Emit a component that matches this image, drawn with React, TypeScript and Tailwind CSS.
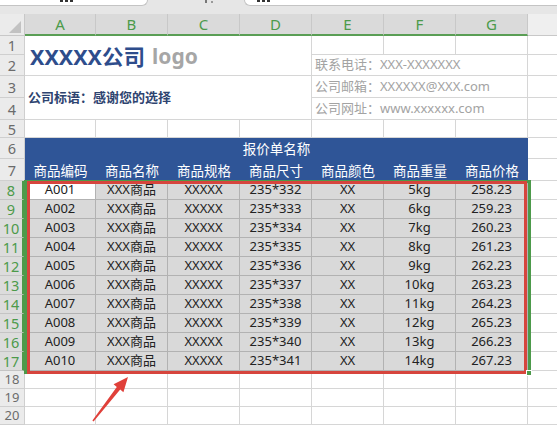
import * as React from "react"

const COLS = ["A", "B", "C", "D", "E", "F", "G"]
const HEADS = ["商品编码", "商品名称", "商品规格", "商品尺寸", "商品颜色", "商品重量", "商品价格"]

const rows = Array.from({ length: 10 }, (_, i) => [
  `A${String(i + 1).padStart(3, "0")}`,
  "XXX商品",
  "XXXXX",
  `235*${332 + i}`,
  "XX",
  `${5 + i}kg`,
  `${258 + i}.23`,
])

function RowHead({ n, sel }: { n: number; sel?: boolean }) {
  return (
    <div
      className={
        sel
          ? "flex items-center justify-center border-b border-b-[#c4c4c4] border-r-[3px] border-r-[#4c9a4a] bg-[#dcdcdc] text-[14.5px] leading-[14px] text-[#4c9a4a]"
          : n > 17
            ? "flex items-center justify-center border-b border-r border-[#cfcfcf] bg-[#ebebeb] text-[13px] leading-[13px] text-[#6b6b6b]"
            : "flex items-center justify-center border-b border-r border-[#cfcfcf] bg-[#ebebeb] text-[14.5px] leading-[14px] text-[#6b6b6b]"
      }
    >
      {n}
    </div>
  )
}

const white = "border-r border-b border-[#d6d6d6] bg-white"
const whiteH = "border-b border-[#d6d6d6] bg-white"
const navy = "flex items-center justify-center bg-[#2f5597] text-[13.5px] text-white"

export default function App() {
  return (
    <div className="relative h-[426px] w-[557px] overflow-hidden bg-white font-['Noto_Sans','Noto_Sans_CJK_SC',sans-serif]">
      {/* formula bar remains */}
      <div className="flex h-[14px] items-start bg-[#e6e6e6]">
        <div className="flex h-[6px] w-[148px] gap-[2px] rounded-br-md border-b border-r border-[#c4c4c4] bg-white pl-[60px]">
          <span className="h-[2px] w-[3px] bg-[#333]" />
          <span className="h-[2px] w-[3px] bg-[#333]" />
          <span className="h-[2px] w-[3px] bg-[#333]" />
        </div>
        <div className="flex w-[96px] gap-[4px] pl-[57px]">
          <span className="h-[3px] w-[2px] bg-[#777]" />
          <span className="mt-[1px] h-[2px] w-[2px] bg-[#999]" />
        </div>
        <div className="flex h-[6px] flex-1 gap-[2px] rounded-bl-md border-b border-l border-[#c4c4c4] bg-white pl-[12px]">
          <span className="h-[2px] w-[3px] bg-[#333]" />
          <span className="h-[2px] w-[3px] bg-[#333]" />
          <span className="h-[2px] w-[3px] bg-[#333]" />
        </div>
      </div>

      <div className="grid grid-cols-[25px_71px_72px_72px_72px_72px_72px_72px_1fr] grid-rows-[22px_19px_21px_22px_22px_18px_21px_22px_repeat(10,19px)_18px_18px_18px]">
        {/* column headers */}
        <div className="relative border-b border-r border-[#c8c8c8] bg-[#ebebeb]">
          <svg className="absolute bottom-[2px] right-[3px]" width="12" height="12" viewBox="0 0 12 12">
            <polygon points="12,0 12,12 0,12" fill="#c2c2c2" />
          </svg>
        </div>
        {COLS.map((c) => (
          <div
            key={c}
            className="flex items-center justify-center border-r border-r-[#c8c8c8] border-b-2 border-b-[#5a9e55] bg-[#dadada] text-[15px] leading-none text-[#4c9a4a]"
          >
            {c}
          </div>
        ))}
        <div className="border-b border-[#c8c8c8] bg-[#efefef]" />

        {/* rows 1-2 */}
        <RowHead n={1} />
        <div className={`col-span-4 row-span-2 flex items-center pl-[5px] pt-[2px] ${white}`}>
          <span className="text-[21.5px] font-bold leading-none text-[#2e4d8c]">XXXXX公司</span>
          <span className="ml-[7px] text-[21px] font-bold leading-none text-[#a6a6a6]">logo</span>
        </div>
        <div className={white} />
        <div className={white} />
        <div className={white} />
        <div className={whiteH} />

        <RowHead n={2} />
        <div className={`col-span-3 flex items-center pl-[3px] text-[13px] text-[#a3a3a3] ${white}`}>
          联系电话：XXX-XXXXXXX
        </div>
        <div className={whiteH} />

        {/* rows 3-4 */}
        <RowHead n={3} />
        <div className={`col-span-4 row-span-2 flex items-center pl-[3px] text-[13px] font-bold text-[#2e4470] ${white}`}>
          公司标语：感谢您的选择
        </div>
        <div className={`col-span-3 flex items-center pl-[3px] text-[13px] text-[#a3a3a3] ${white}`}>
          公司邮箱：XXXXXX@XXX.com
        </div>
        <div className={whiteH} />

        <RowHead n={4} />
        <div className={`col-span-3 flex items-center pl-[3px] text-[13px] text-[#a3a3a3] ${white}`}>
          公司网址：www.xxxxxx.com
        </div>
        <div className={whiteH} />

        {/* row 5 */}
        <RowHead n={5} />
        {COLS.map((c) => (
          <div key={c} className={white} />
        ))}
        <div className={whiteH} />

        {/* rows 6-7 title band */}
        <RowHead n={6} />
        <div className={`col-span-7 pt-[2px] ${navy}`}>报价单名称</div>
        <div className={whiteH} />

        <RowHead n={7} />
        {HEADS.map((h) => (
          <div key={h} className={`pt-[3px] ${navy}`}>
            {h}
          </div>
        ))}
        <div className={whiteH} />

        {/* data rows */}
        {rows.map((r, i) => (
          <React.Fragment key={i}>
            <RowHead n={8 + i} sel />
            {r.map((v, j) => (
              <div
                key={j}
                className={
                  i === 0 && j === 0
                    ? "flex items-center justify-center border-b border-r border-[#b2b2b2] bg-white text-[13px] text-[#222]"
                    : "flex items-center justify-center border-b border-r border-[#b2b2b2] bg-[#d9d9d9] text-[13px] text-[#222]"
                }
              >
                {v}
              </div>
            ))}
            <div className={whiteH} />
          </React.Fragment>
        ))}

        {/* rows 18-20 */}
        {[18, 19, 20].map((n) => (
          <React.Fragment key={n}>
            <RowHead n={n} />
            {COLS.map((c) => (
              <div key={c} className={white} />
            ))}
            <div className={whiteH} />
          </React.Fragment>
        ))}
      </div>

      {/* selection + annotation */}
      <div className="pointer-events-none absolute left-[24px] top-[180px] h-[194px] w-[507px] border-[3px] border-[#4c9a4a]" />
      <div className="pointer-events-none absolute left-[27px] top-[181px] h-[193px] w-[500px] border-[3px] border-[#d6453d]" />
      <div className="pointer-events-none absolute left-[526px] top-[370px] h-[6px] w-[6px] border border-white bg-[#4c9a4a]" />
      <svg className="pointer-events-none absolute left-0 top-0" width="557" height="426" viewBox="0 0 557 426">
        <polygon
          points="93.6,421.4 120.2,389.6 123.4,392.2 128,377 113.6,384.2 116.8,386.9 92.4,420.6"
          fill="#e0403a"
        />
      </svg>
    </div>
  )
}
